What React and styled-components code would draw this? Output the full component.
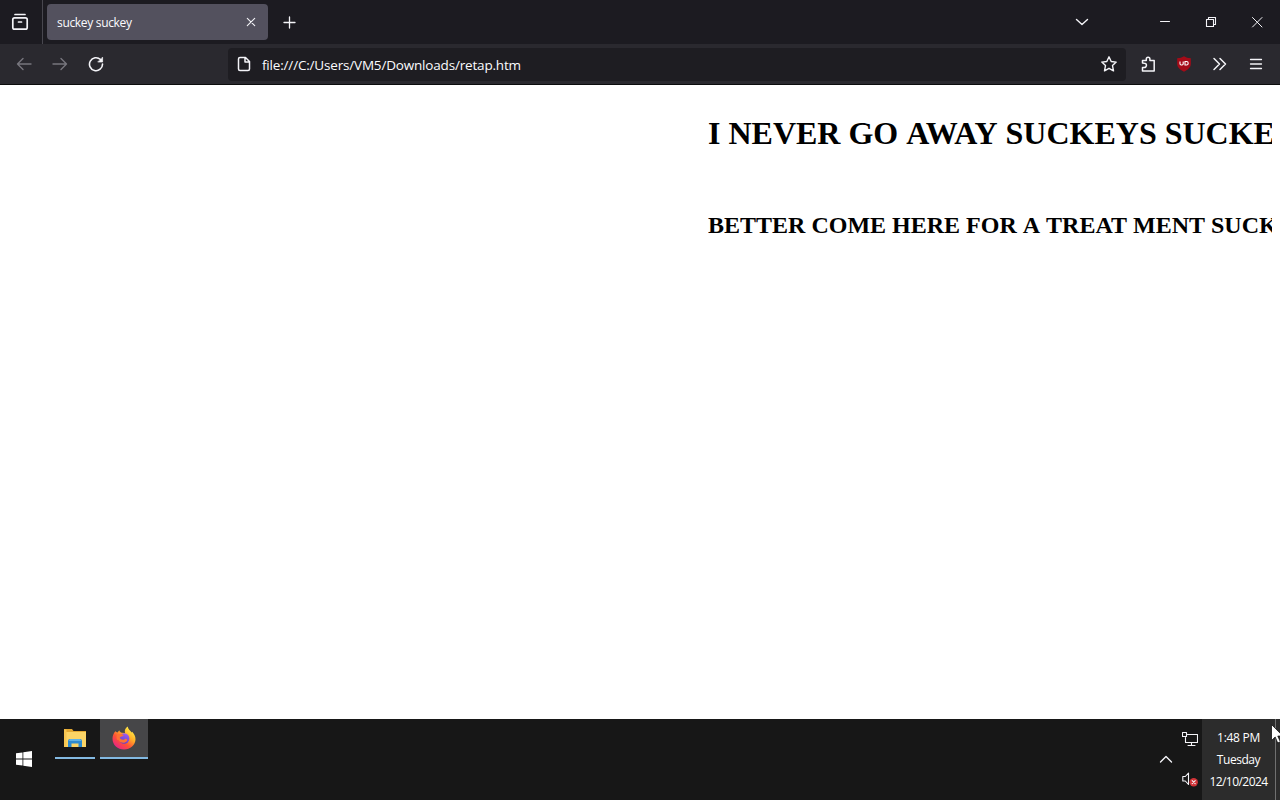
import styled, { createGlobalStyle } from "styled-components";

const GlobalStyle = createGlobalStyle`
  body {
    margin: 0;
    overflow: hidden;
    background-color: #fff;
  }
  * {
    box-sizing: border-box;
  }
`;

const Screen = styled.div`
  position: relative;
  display: flex;
  flex-direction: column;
  width: 1280px;
  height: 800px;
  overflow: hidden;
  font-family: "Open Sans", "Noto Sans", sans-serif;
  color: #fbfbfe;
`;

const Icon = styled.svg`
  display: block;
  flex: none;
  width: ${(props) => props.$size || 16}px;
  height: ${(props) => props.$size || 16}px;
  fill: none;
  stroke: ${(props) => props.$color || "#f4f4f8"};
  stroke-width: ${(props) => props.$weight || 1.4};
  stroke-linecap: round;
  stroke-linejoin: round;
`;

// tab strip
const TabBar = styled.div`
  display: flex;
  align-items: center;
  height: 44px;
  background-color: #1c1b21;
`;

const FirefoxView = styled.div`
  display: flex;
  align-items: center;
  align-self: stretch;
  width: 43px;
  padding-left: 11px;
  border-right: 1px solid #48474f;
`;

const Tab = styled.div`
  display: flex;
  align-items: center;
  justify-content: space-between;
  width: 221px;
  height: 36px;
  margin: 0 13px 0 4px;
  padding: 0 9px 0 10px;
  border-radius: 4px;
  background-color: #53515e;
`;

const TabTitle = styled.span`
  padding-top: 2px;
  font-size: 12px;
  line-height: 16px;
  letter-spacing: -0.32px;
  white-space: nowrap;
`;

const WindowButtons = styled.div`
  display: flex;
  align-items: center;
  margin-left: auto;
  padding-right: 15px;
`;

const WindowButton = styled.div`
  margin-left: ${(props) => props.$gap || 0}px;
`;

// address bar
const NavBar = styled.div`
  display: flex;
  align-items: center;
  height: 41px;
  background-color: #2a292f;
  border-bottom: 1px solid #0c0c0d;
`;

const NavButtons = styled.div`
  display: flex;
  gap: 20px;
  width: 228px;
  padding-left: 16px;
`;

const UrlBar = styled.div`
  display: flex;
  align-items: center;
  width: 898px;
  height: 33px;
  padding: 0 9px 0 8px;
  border-radius: 4px;
  background-color: #1e1d22;
`;

const Url = styled.span`
  flex: 1;
  padding: 1px 0 0 10px;
  font-size: 13.5px;
  line-height: 18px;
  letter-spacing: -0.18px;
  white-space: nowrap;
`;

const Tools = styled.div`
  display: flex;
  gap: 20px;
  padding-left: 14px;
`;

// page
const Page = styled.div`
  height: 634px;
  padding: 0 8px 0 708px;
  background-color: #fff;
  color: #000;
  font-family: "Liberation Serif", "Times New Roman", serif;
`;

const Marquee = styled.div`
  display: flex;
  gap: 0.25em;
  overflow: hidden;
  font-weight: bold;
  white-space: nowrap;
`;

const Title = styled(Marquee)`
  padding-top: 30px;
  font-size: 32px;
  line-height: 37px;
`;

const Subtitle = styled(Marquee)`
  padding-top: 60px;
  font-size: 24px;
  line-height: 27px;
`;

// taskbar
const Taskbar = styled.div`
  display: flex;
  height: 81px;
  background-color: #171717;
`;

const Start = styled.div`
  display: flex;
  align-items: center;
  justify-content: center;
  width: 48px;
  height: 80px;
`;

const TaskButton = styled.div`
  display: flex;
  align-items: center;
  justify-content: center;
  width: ${(props) => props.$width}px;
  height: 40px;
  margin-left: ${(props) => props.$gap}px;
  background-color: ${(props) => (props.$active ? "#464648" : "transparent")};
  border-bottom: 2px solid #83b9e2;
`;

const Tray = styled.div`
  display: flex;
  align-items: center;
  margin-left: auto;
  height: 81px;
`;

const TrayIcons = styled.div`
  display: flex;
  flex-direction: column;
  justify-content: space-between;
  height: 81px;
  padding: 12px 4px 13px 8px;
`;

const Clock = styled.div`
  display: flex;
  flex-direction: column;
  align-items: center;
  justify-content: center;
  width: 73px;
  height: 81px;
  background-color: #2c2c2c;
  color: #fff;
  font-size: 12px;
  line-height: 22px;
`;

const ClockLine = styled.span`
  letter-spacing: ${(props) => props.$spacing};
  white-space: nowrap;
`;

const ShowDesktop = styled.div`
  width: 5px;
  height: 81px;
  border-left: 1px solid #707070;
  background-color: #2c2c2c;
`;

const Cursor = styled.svg`
  position: absolute;
  left: 1271px;
  top: 724px;
  width: 14px;
  height: 21px;
`;

function FolderIcon() {
  return (
    <svg width="24" height="24" viewBox="0 0 24 24">
      <path d="M1 3h8l1.500 2H23v5H1z" fill="#e3a832" />
      <path d="M1 6h22v15H1z" fill="#fbd466" />
      <path d="M1 3.500h2.500V21H1z" fill="#f6c551" />
      <path d="M5 15q0-2 2-2h10q2 0 2 2v6h-3.500v-3.500h-7V21H5z" fill="#2c8ad0" />
      <path d="M7 13h10l1.500 2h-13z" fill="#5fb2e6" />
    </svg>
  );
}

function FirefoxIcon() {
  return (
    <svg width="24" height="24" viewBox="0 0 24 24">
      <defs>
        <linearGradient id="fox" x1="0.850" y1="0.100" x2="0.200" y2="0.950">
          <stop offset="0" stopColor="#fff04a" />
          <stop offset="0.350" stopColor="#ffad27" />
          <stop offset="0.650" stopColor="#ff5035" />
          <stop offset="1" stopColor="#e72486" />
        </linearGradient>
        <linearGradient id="globe" x1="0.700" y1="0" x2="0.300" y2="1">
          <stop offset="0" stopColor="#a05cf5" />
          <stop offset="1" stopColor="#5b42c6" />
        </linearGradient>
      </defs>
      <path
        d="M3.300 5.200C4 6 4.700 6.300 5.500 6.500L7.300 4.200C7.500 5.600 8.600 6.300 10 6.700L13 7C12.200 4.500 13.500 1.800 15.700.5c.3 2.700 2.400 3.900 4 6l.5-.8c2 2.100 3.300 4.500 3.300 7.500C23.500 19 18.300 23.500 12 23.500S.5 19 .5 12.700c0-2.500.8-5.200 2.800-7.500z"
        fill="url(#fox)"
      />
      <circle cx="12.200" cy="12.500" r="5.200" fill="url(#globe)" />
      <path d="M5 9c2.200-1.500 5-1 6.700.3-.7 1.500-3.400.8-4 2.700 1.200 1 2.500 2.600 5 1.200 1.600-.9 3.100.2 2.400 1.500-2 3-7.300 2.600-8.800-1C4.700 15 4 11 5 9z" fill="#ff7133" />
    </svg>
  );
}

// each word is its own flex item, so no kerning across the spaces
function Words({ text }) {
  return text.split(" ").map((word, i) => <span key={i}>{word}</span>);
}

function App() {
  return (
    <Screen>
      <GlobalStyle />
      <TabBar>
        <FirefoxView>
          <Icon $size={18} $weight={1.7} viewBox="0 0 18 18">
            <path d="M4 1.500h10M3.500 4.800h11q1.700 0 1.700 1.700v8q0 1.700-1.700 1.700h-11q-1.700 0-1.700-1.700v-8q0-1.700 1.700-1.700zM7.500 9h3" />
          </Icon>
        </FirefoxView>
        <Tab>
          <TabTitle>suckey suckey</TabTitle>
          <Icon $weight={1.1} viewBox="0 0 16 16">
            <path d="M4.300 4.300l7.400 7.400M11.700 4.300l-7.400 7.400" />
          </Icon>
        </Tab>
        <Icon $weight={1.3} viewBox="0 0 16 16">
          <path d="M8.500 3v11M3 8.500h11" />
        </Icon>
        <WindowButtons>
          <WindowButton>
            <Icon viewBox="0 0 16 16">
              <path d="M2.500 5.500L8 10.500l5.500-5" />
            </Icon>
          </WindowButton>
          <WindowButton $gap={67}>
            <Icon $weight={1} viewBox="0 0 16 16">
              <path d="M3.500 7.500h9" />
            </Icon>
          </WindowButton>
          <WindowButton $gap={30}>
            <Icon $weight={1.1} viewBox="0 0 16 16">
              <path d="M3.500 5.500h7v7h-7zM5.500 5.500v-2h7v7h-2" />
            </Icon>
          </WindowButton>
          <WindowButton $gap={30}>
            <Icon $weight={1} viewBox="0 0 16 16">
              <path d="M3.500 3.500l9.500 9.500M13 3.500L3.500 13" />
            </Icon>
          </WindowButton>
        </WindowButtons>
      </TabBar>

      <NavBar>
        <NavButtons>
          <Icon $color="#77767e" viewBox="0 0 16 16">
            <path d="M15 8H1.500M7 2.500L1.500 8 7 13.500" />
          </Icon>
          <Icon $color="#77767e" viewBox="0 0 16 16">
            <path d="M1 8h13.500M9 2.500L14.500 8 9 13.500" />
          </Icon>
          <Icon $weight={1.6} viewBox="0 0 16 16">
            <path d="M12.500 3.500A6.500 6.500 0 1 0 14.500 8" />
            <path d="M14.600 1.500v4.500h-4.500z" fill="#f4f4f8" strokeWidth="0.700" />
          </Icon>
        </NavButtons>
        <UrlBar>
          <Icon $weight={1.5} viewBox="0 0 16 16">
            <path d="M4 1.500h5.500l4 4V13q0 1.500-1.500 1.500H4q-1.500 0-1.500-1.500V3q0-1.500 1.500-1.500zM9 1.500V6h4.500" />
          </Icon>
          <Url>file:///C:/Users/VM5/Downloads/retap.htm</Url>
          <Icon viewBox="0 0 16 16">
            <path d="M8 .8l2.200 4.700 5 .6-3.700 3.500 1 5.200L8 12.300l-4.500 2.500 1-5.200L.8 6.100l5-.6z" />
          </Icon>
        </UrlBar>
        <Tools>
          <Icon $weight={1.5} viewBox="0 0 16 16">
            <path d="M2.500 7V4.500H6.300V3a1.800 1.800 0 0 1 3.600 0v1.500h4.300V15H2.500v-3.500h1.800a2.100 2.100 0 0 0 0-4.300z" />
          </Icon>
          <svg width="16" height="16" viewBox="0 0 16 16">
            <path d="M8 .3c2 1.200 4 1.900 6.800 2V8c0 3.700-3.300 6-6.800 7.700C4.500 14 1.200 11.700 1.200 8V2.300C4 2.200 6 1.500 8 .3z" fill="#a50b18" />
            <path d="M4 5.500v2.300q0 1.200 1.200 1.200h.8q1.200 0 1.200-1.200V5.500M9 5.500h1.500q1.700 0 1.700 1.750T10.500 9H9z" fill="none" stroke="#fff" strokeWidth="1.100" />
          </svg>
          <Icon $weight={1.5} viewBox="0 0 16 16">
            <path d="M2 2.500L7.500 8 2 13.500M8 2.500L13.500 8 8 13.500" />
          </Icon>
          <Icon $weight={1.3} viewBox="0 0 16 16">
            <path d="M2.500 3.500h11M2.500 8h11M2.500 12.500h11" />
          </Icon>
        </Tools>
      </NavBar>

      <Page>
        <Title>
          <Words text="I NEVER GO AWAY SUCKEYS SUCKE" />
        </Title>
        <Subtitle>
          <Words text="BETTER COME HERE FOR A TREAT MENT SUCK" />
        </Subtitle>
      </Page>

      <Taskbar>
        <Start>
          <svg width="16" height="16" viewBox="0 0 16 16">
            <path d="M0 2.300l6.500-.9v6.200H0zM7.300 1.300L16 0v7.600H7.300zM0 8.400h6.500v6.200L0 13.700zM7.300 8.400H16V16l-8.700-1.300z" fill="#fff" />
          </svg>
        </Start>
        <TaskButton $width={40} $gap={7}>
          <FolderIcon />
        </TaskButton>
        <TaskButton $width={48} $gap={5} $active>
          <FirefoxIcon />
        </TaskButton>
        <Tray>
          <Icon $weight={1.4} viewBox="0 0 16 16">
            <path d="M2.500 10L8 4.500l5.500 5.500" />
          </Icon>
          <TrayIcons>
            <Icon $weight={1.1} viewBox="0 0 16 16">
              <path d="M5.500 3.500h10v8H3.500V6.500M.5 1.500h4v4h-4zM9.500 11.500v3M6 14.500h7" />
            </Icon>
            <Icon $weight={1.1} viewBox="0 0 16 16">
              <path d="M6.500 5V2L3.300 5.500H.8V10h2.500l3.200 3.500z" />
              <circle cx="11.700" cy="11.200" r="4.200" fill="#d13438" stroke="none" />
              <path d="M10.200 9.700l3 3M13.200 9.700l-3 3" />
            </Icon>
          </TrayIcons>
          <Clock>
            <ClockLine $spacing="-0.3px">1:48 PM</ClockLine>
            <ClockLine $spacing="-0.45px">Tuesday</ClockLine>
            <ClockLine $spacing="-0.55px">12/10/2024</ClockLine>
          </Clock>
          <ShowDesktop />
        </Tray>
      </Taskbar>

      <Cursor viewBox="0 0 14 21">
        <path d="M.5.5v16l3.700-3.500 2.500 6 2.700-1.200-2.600-5.700h5.200z" fill="#fff" stroke="#111" strokeWidth="0.800" />
      </Cursor>
    </Screen>
  );
}

export default App;
